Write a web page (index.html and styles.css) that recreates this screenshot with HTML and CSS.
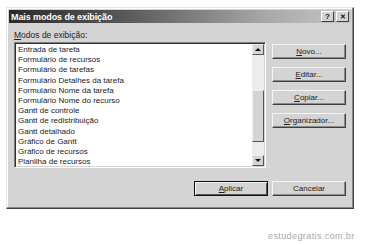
FILE: index.html
```html
<!DOCTYPE html>
<html>
<head>
<meta charset="utf-8">
<link rel="stylesheet" href="styles.css">
</head>
<body>
<div class="dialog">
  <div class="titlebar">
    <span class="title">Mais modos de exibição</span>
    <span class="tbtns">
      <span class="tbtn">?</span>
      <span class="tbtn x">&#x2715;</span>
    </span>
  </div>
  <div class="body">
    <div class="main">
      <div class="leftcol">
        <div class="label"><u>M</u>odos de exibição:</div>
        <div class="listbox">
          <ul class="items">
            <li>Entrada de tarefa</li>
            <li>Formulário de recursos</li>
            <li>Formulário de tarefas</li>
            <li>Formulário Detalhes da tarefa</li>
            <li>Formulário Nome da tarefa</li>
            <li>Formulário Nome do recurso</li>
            <li>Gantt de controle</li>
            <li>Gantt de redistribuição</li>
            <li>Gantt detalhado</li>
            <li>Gráfico de Gantt</li>
            <li>Gráfico de recursos</li>
            <li>Planilha de recursos</li>
          </ul>
          <div class="scrollbar">
            <div class="arrow"><span class="tri up"></span></div>
            <div class="track top"></div>
            <div class="thumb"></div>
            <div class="track bottom"></div>
            <div class="arrow"><span class="tri down"></span></div>
          </div>
        </div>
      </div>
      <div class="rightcol">
        <div class="btn"><u>N</u>ovo...</div>
        <div class="btn"><u>E</u>ditar...</div>
        <div class="btn"><u>C</u>opiar...</div>
        <div class="btn"><u>O</u>rganizador...</div>
      </div>
    </div>
    <div class="footer">
      <div class="btn default"><span><u>A</u>plicar</span></div>
      <div class="btn">Cancelar</div>
    </div>
  </div>
</div>
<div class="watermark">estudegratis.com.br</div>
</body>
</html>
```
FILE: styles.css
```css
html, body {
  margin: 0;
  padding: 0;
  background: #ffffff;
}
body {
  font-family: "Liberation Sans", Arial, sans-serif;
  color: #111;
}
.dialog {
  margin: 7px 0 0 6px;
  width: 346px;
  height: 200px;
  background: #d4d4d4;
  border-top: 1px solid #e6e6e6;
  border-left: 1px solid #e6e6e6;
  border-right: 1px solid #404040;
  border-bottom: 1px solid #404040;
  box-shadow: inset -1px -1px 0 #888, inset 1px 1px 0 #fff;
}
.titlebar {
  margin: 2px 2px 0 2px;
  height: 13px;
  background: linear-gradient(to right, #2a2a2a 0%, #5a5a5a 35%, #a8a8a8 75%, #c6c6c6 100%);
  display: flex;
  align-items: center;
  justify-content: space-between;
}
.title {
  color: #fff;
  font-weight: bold;
  font-size: 9px;
  padding-left: 2px;
  letter-spacing: -0.1px;
}
.tbtns {
  display: flex;
  gap: 2px;
  padding-right: 2px;
}
.tbtn {
  width: 11px;
  height: 9px;
  background: #d4d4d4;
  border-top: 1px solid #fff;
  border-left: 1px solid #fff;
  border-right: 1px solid #404040;
  border-bottom: 1px solid #404040;
  font-size: 8px;
  font-weight: bold;
  line-height: 9px;
  text-align: center;
  color: #111;
}
.tbtn.x {
  font-size: 7px;
}
.body {
  padding: 7px 6px 0 7px;
}
.main {
  display: flex;
  gap: 6px;
}
.leftcol {
  width: 252px;
}
.label {
  font-size: 8.5px;
  height: 12px;
  line-height: 11px;
  color: #222;
}
.listbox {
  height: 122px;
  background: #fff;
  border-top: 1px solid #808080;
  border-left: 1px solid #808080;
  border-right: 1px solid #fff;
  border-bottom: 1px solid #fff;
  box-shadow: inset 1px 1px 0 #303030, inset -1px -1px 0 #d4d4d4;
  display: flex;
  justify-content: space-between;
  padding: 1px 1px 1px 2px;
}
.items {
  list-style: none;
  margin: 0;
  padding: 1px 0 0 1px;
  font-size: 8px;
  line-height: 10.2px;
  color: #1a1a1a;
}
.scrollbar {
  width: 12px;
  display: flex;
  flex-direction: column;
}
.arrow {
  height: 9px;
  background: #d4d4d4;
  border-top: 1px solid #eee;
  border-left: 1px solid #eee;
  border-right: 1px solid #555;
  border-bottom: 1px solid #555;
  display: flex;
  align-items: center;
  justify-content: center;
}
.tri {
  width: 0;
  height: 0;
  border-left: 3px solid transparent;
  border-right: 3px solid transparent;
}
.tri.up {
  border-bottom: 3px solid #111;
}
.tri.down {
  border-top: 3px solid #111;
}
.track {
  background: #ececec;
}
.track.top {
  height: 35px;
}
.track.bottom {
  flex: 1;
}
.thumb {
  height: 50px;
  background: #d4d4d4;
  border-top: 1px solid #eee;
  border-left: 1px solid #eee;
  border-right: 1px solid #555;
  border-bottom: 1px solid #555;
}
.rightcol {
  padding-top: 14px;
  display: flex;
  flex-direction: column;
  gap: 8px;
}
.btn {
  width: 72px;
  height: 13px;
  background: #d4d4d4;
  border-top: 1px solid #f4f4f4;
  border-left: 1px solid #f4f4f4;
  border-right: 1px solid #404040;
  border-bottom: 1px solid #404040;
  box-shadow: inset -1px -1px 0 #8a8a8a;
  font-size: 8px;
  line-height: 13px;
  text-align: center;
  color: #222;
}
.footer {
  display: flex;
  justify-content: flex-end;
  gap: 4px;
  padding-top: 13px;
  padding-right: 1px;
}
.btn.default {
  border: 1px solid #111;
  box-shadow: inset 1px 1px 0 #f4f4f4, inset -1px -1px 0 #555;
}
.watermark {
  margin: 22px 0 0 268px;
  font-size: 9px;
  letter-spacing: 0.4px;
  white-space: nowrap;
  color: #a8a8a8;
  font-family: "Liberation Sans", sans-serif;
}
```
